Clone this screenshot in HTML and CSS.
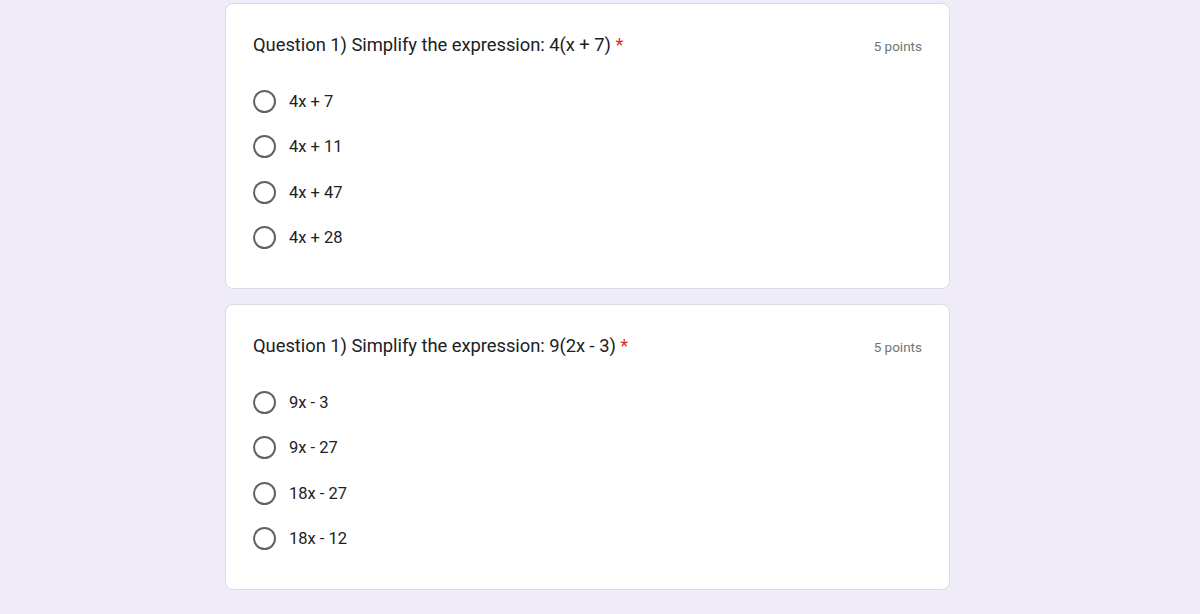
FILE: index.html
```html
<!DOCTYPE html>
<html lang="en">
<head>
<meta charset="utf-8">
<title>Quiz</title>
<link rel="stylesheet" href="styles.css">
</head>
<body>
<main class="form">
  <section class="card">
    <div class="q-head">
      <h2 class="q-title">Question 1) Simplify the expression: 4(x + 7) <span class="req">*</span></h2>
      <span class="points">5 points</span>
    </div>
    <ul class="options">
      <li class="option"><span class="radio"></span><span class="label">4x + 7</span></li>
      <li class="option"><span class="radio"></span><span class="label">4x + 11</span></li>
      <li class="option"><span class="radio"></span><span class="label">4x + 47</span></li>
      <li class="option"><span class="radio"></span><span class="label">4x + 28</span></li>
    </ul>
  </section>
  <section class="card">
    <div class="q-head">
      <h2 class="q-title">Question 1) Simplify the expression: 9(2x - 3) <span class="req">*</span></h2>
      <span class="points">5 points</span>
    </div>
    <ul class="options">
      <li class="option"><span class="radio"></span><span class="label">9x - 3</span></li>
      <li class="option"><span class="radio"></span><span class="label">9x - 27</span></li>
      <li class="option"><span class="radio"></span><span class="label">18x - 27</span></li>
      <li class="option"><span class="radio"></span><span class="label">18x - 12</span></li>
    </ul>
  </section>
</main>
</body>
</html>
```

FILE: styles.css
```css
html, body {
  margin: 0;
  padding: 0;
  background: #f0ebf8;
  font-family: Roboto, "Liberation Sans", Arial, sans-serif;
  color: #202124;
}

.form {
  width: 725px;
  margin-left: 225px;
  padding-top: 3px;
  display: flex;
  flex-direction: column;
  gap: 15px;
}

.card {
  box-sizing: border-box;
  height: 286px;
  background: #ffffff;
  border: 1px solid #dadce0;
  border-radius: 8px;
  padding: 27px 27px 0 27px;
}

.q-head {
  display: flex;
  align-items: center;
  justify-content: space-between;
  height: 28px;
}

.q-title {
  margin: 0;
  font-family: Roboto, "Open Sans", sans-serif;
  font-weight: 400;
  font-size: 18.4px;
  line-height: 28px;
  letter-spacing: -0.05px;
  color: #202124;
}

.req {
  color: #d93025;
}

.points {
  font-size: 13.5px;
  color: #70757a;
  margin-top: 2px;
}

.options {
  list-style: none;
  margin: 19.5px 0 0 0;
  padding: 0;
}

.option {
  display: flex;
  align-items: center;
  height: 45.5px;
}

.radio {
  box-sizing: border-box;
  width: 23px;
  height: 23px;
  border: 2.5px solid #5f6368;
  border-radius: 50%;
  flex: none;
}

.label {
  margin-left: 13px;
  font-size: 16.5px;
  color: #202124;
}
```
